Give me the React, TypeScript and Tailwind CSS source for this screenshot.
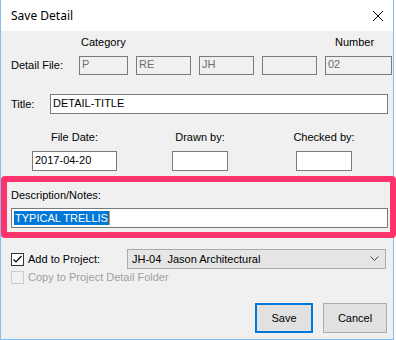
import React from 'react';

const ui = { fontFamily: '"Liberation Sans", Arial, sans-serif' };

function Box({ w, value }: { w: string; value?: string }) {
  return (
    <div
      className={`${w} h-[19px] border border-[#7a7a7a] bg-[#f0f0f0] text-[#6d6d6d] text-[11px] leading-[15px] pl-[2px]`}
    >
      {value}
    </div>
  );
}

function Field({ w, value }: { w: string; value?: string }) {
  return (
    <div className={`${w} h-[20px] border border-[#7a7a7a] bg-white text-black text-[11px] leading-[17px] pl-[2px]`}>
      {value}
    </div>
  );
}

export default function App() {
  return (
    <div className="w-[396px] h-[340px] bg-white" style={ui}>
      <div className="w-[394px] h-[340px] border-x border-b border-[#83bdf3] flex flex-col">
        {/* Title bar */}
        <div className="h-[31px] bg-white flex items-center justify-between pl-[10px] pr-[8px]">
          <span className="text-[12px] text-black" style={{ fontFamily: '"Noto Sans", "Open Sans", sans-serif' }}>
            Save Detail
          </span>
          <svg width="12" height="12" viewBox="0 0 12 12" className="mr-[1px]">
            <path d="M1 1 L11 11 M11 1 L1 11" stroke="#000" strokeWidth="1" />
          </svg>
        </div>

        {/* Body */}
        <div className="flex-1 bg-[#f0f0f0] text-[11px] text-black flex flex-col">
          {/* Category / Number */}
          <div className="mt-[3px] h-[16px] flex items-center">
            <span className="ml-[80px]">Category</span>
            <span className="ml-auto mr-[5px] w-[67px] text-center">Number</span>
          </div>

          {/* Detail file */}
          <div className="mt-[6px] flex items-center">
            <span className="ml-[10px] w-[68px]">Detail File:</span>
            <div className="flex gap-[8px]">
              <Box w="w-[49px]" value="P" />
              <Box w="w-[55px]" value="RE" />
              <Box w="w-[55px]" value="JH" />
              <Box w="w-[55px]" />
              <Box w="w-[67px]" value="02" />
            </div>
          </div>

          {/* Title */}
          <div className="mt-[19px] flex items-center">
            <span className="ml-[10px] w-[39px]">Title:</span>
            <Field w="w-[338px]" value="DETAIL-TITLE" />
          </div>

          {/* Dates */}
          <div className="mt-[15px] flex">
            <div className="ml-[31px] w-[85px] flex flex-col items-center">
              <span className="h-[16px] leading-[16px]">File Date:</span>
              <div className="mt-[6px]">
                <Field w="w-[85px]" value="2017-04-20" />
              </div>
            </div>
            <div className="ml-[55px] w-[56px] flex flex-col items-center">
              <span className="h-[16px] leading-[16px] whitespace-nowrap">Drawn by:</span>
              <div className="mt-[6px]">
                <Field w="w-[56px]" />
              </div>
            </div>
            <div className="ml-[68px] w-[56px] flex flex-col items-center">
              <span className="h-[16px] leading-[16px] whitespace-nowrap">Checked by:</span>
              <div className="mt-[6px]">
                <Field w="w-[56px]" />
              </div>
            </div>
          </div>

          {/* Description */}
          <div className="relative mt-[5px] h-[62px] pt-[11px]">
            <div className="h-[16px] leading-[16px] ml-[10px]">Description/Notes:</div>
            <div className="mt-[5px] ml-[10px] w-[377px] h-[20px] border border-[#7a7a7a] bg-white flex items-center pl-[2px]">
              <span className="bg-[#0078d7] text-white leading-[14px] h-[14px] px-[1px]">TYPICAL TRELLIS</span>
              <span className="w-[1px] h-[14px] bg-[#e8921c]" />
            </div>
            <div className="absolute top-0 bottom-0 left-0 right-[-3px] border-[6px] border-[#ff336b] rounded-[4px] pointer-events-none" />
          </div>

          {/* Add to project */}
          <div className="mt-[11px] flex items-center h-[20px]">
            <div className="ml-[10px] w-[13px] h-[13px] border border-[#333] bg-white flex items-center justify-center">
              <svg width="11" height="11" viewBox="0 0 11 11">
                <path d="M1.5 5.5 L4 8 L9.5 2" stroke="#000" strokeWidth="1.2" fill="none" />
              </svg>
            </div>
            <span className="ml-[4px] w-[99px]">Add to Project:</span>
            <div className="w-[259px] h-[20px] border border-[#acacac] bg-[#e5e5e5] flex items-center pl-[4px] pr-[6px]">
              <span className="whitespace-pre">JH-04  Jason Architectural</span>
              <svg width="9" height="6" viewBox="0 0 9 6" className="ml-auto">
                <path d="M0.5 0.5 L4.5 4.5 L8.5 0.5" stroke="#444" strokeWidth="1" fill="none" />
              </svg>
            </div>
          </div>

          {/* Copy */}
          <div className="mt-[1px] flex items-center h-[15px]">
            <div className="ml-[10px] w-[13px] h-[13px] border border-[#cccccc] bg-[#f0f0f0]" />
            <span className="ml-[4px] text-[#a0a0a0]">Copy to Project Detail Folder</span>
          </div>

          {/* Buttons */}
          <div className="mt-[18px] flex justify-end gap-[10px] pr-[6px]">
            <button className="w-[58px] h-[30px] border-2 border-[#0078d7] bg-[#e1e1e1] text-[11px] text-black">
              Save
            </button>
            <button className="w-[64px] h-[30px] border border-[#adadad] bg-[#e1e1e1] text-[11px] text-black">
              Cancel
            </button>
          </div>
        </div>
      </div>
    </div>
  );
}
